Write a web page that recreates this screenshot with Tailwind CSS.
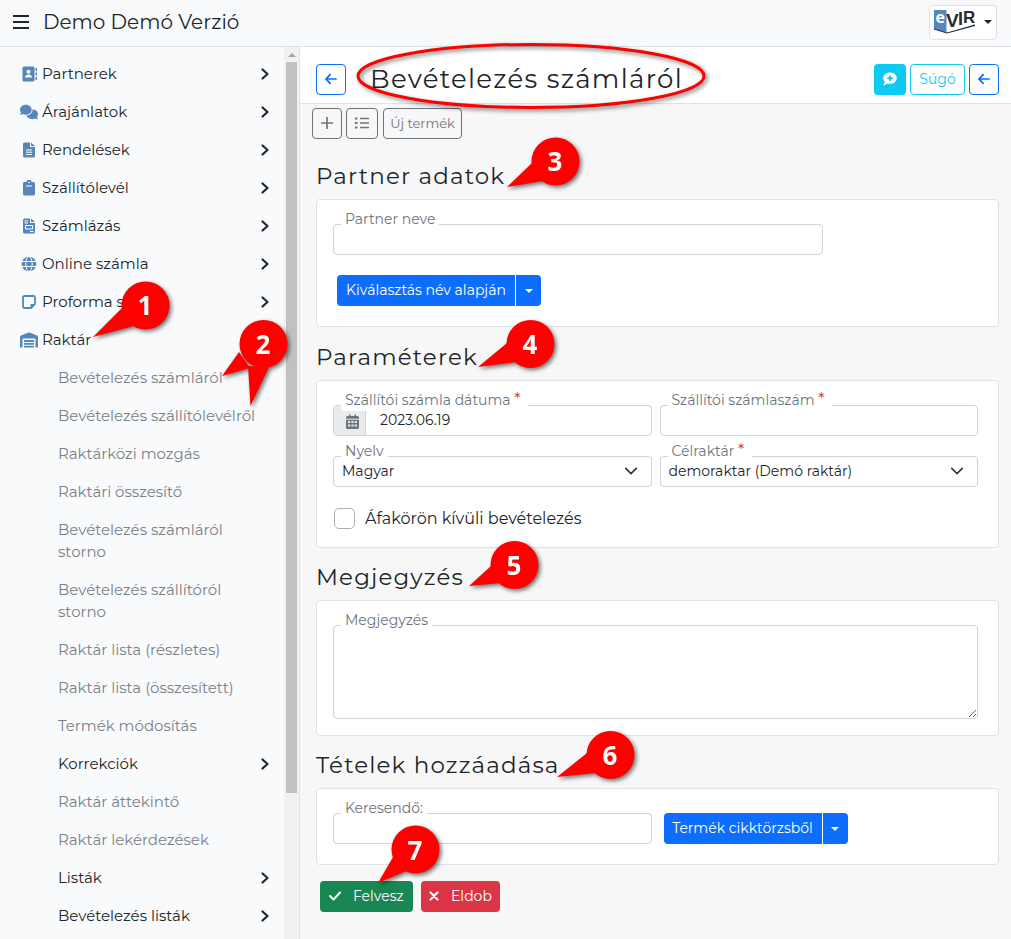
<!DOCTYPE html>
<html lang="hu">
<head>
<meta charset="utf-8">
<meta name="viewport" content="width=device-width, initial-scale=1">
<title>Bevételezés számláról</title>
<script src="https://cdn.jsdelivr.net/npm/@tailwindcss/browser@4"></script>
</head>
<body class="relative h-screen overflow-hidden bg-[#f7f7f7] font-[Montserrat,Inter,sans-serif] text-[15px] leading-[22px] text-[#212529]">

<svg class="hidden" aria-hidden="true">
  <symbol id="chev" viewBox="0 0 10 14"><path d="M2.500 2.500L7.500 7l-5 4.500" fill="none" stroke="currentColor" stroke-width="2.200" stroke-linecap="round" stroke-linejoin="round"/></symbol>
  <symbol id="left" viewBox="0 0 448 512"><path fill="currentColor" d="M9.400 233.400c-12.500 12.500-12.500 32.800 0 45.300l160 160c12.500 12.500 32.800 12.500 45.300 0s12.500-32.800 0-45.300L109.200 288H416c17.700 0 32-14.300 32-32s-14.300-32-32-32H109.300l105.400-105.400c12.500-12.500 12.500-32.800 0-45.300s-32.800-12.500-45.300 0l-160 160z"/></symbol>
  <symbol id="caret" viewBox="0 0 8 4"><path d="M0 0h8L4 4z" fill="currentColor"/></symbol>
  <symbol id="down" viewBox="0 0 16 16"><path d="M2 5l6 6 6-6" fill="none" stroke="#343a40" stroke-width="2" stroke-linecap="round" stroke-linejoin="round"/></symbol>
</svg>

<div class="flex h-full flex-col">
  <header class="flex h-[47px] shrink-0 items-center border-b border-[#dee2e6] bg-[#f8f9fa] pr-3.5 pb-0.5 pl-[13px]">
    <button type="button" aria-label="Menü" class="flex w-4 flex-col gap-[4px]">
      <span class="h-0.5 w-4 bg-[#212529]"></span><span class="h-0.5 w-4 bg-[#212529]"></span><span class="h-0.5 w-4 bg-[#212529]"></span>
    </button>
    <a href="#" class="ml-3.5 text-[20px] leading-7">Demo Demó Verzió</a>
    <button type="button" aria-label="eVIR" class="ml-auto flex h-[35px] w-[68px] items-center gap-2 rounded border border-[#dee2e6] bg-white pl-1">
      <svg class="h-6 w-[42px] overflow-visible" viewBox="0 0 42 24" aria-hidden="true">
        <path d="M0 0h12.500v23L0 19z" fill="#5587bb"/>
        <path d="M0 18.500l13 4 28-8v1.500l-28 7.500-13-4z" fill="#2b2b2b"/>
        <text x="1.500" y="13" font-family="Open Sans" font-weight="700" font-size="16" fill="#fff">e</text>
        <text x="12" y="17" font-family="Liberation Sans" font-weight="700" font-size="19" fill="#2b2b2b">V</text>
        <text x="24" y="15" font-family="Liberation Sans" font-weight="700" font-size="18" fill="#2b2b2b">I</text>
        <text x="29" y="13" font-family="Liberation Sans" font-weight="700" font-size="17" fill="#2b2b2b">R</text>
      </svg>
      <svg class="h-1 w-2"><use href="#caret"/></svg>
    </button>
  </header>

  <div class="flex min-h-0 flex-1">
    <aside class="flex w-[300px] shrink-0 border-r border-[#dee2e6] bg-[#f8fafc]">
      <nav class="min-w-0 flex-1 overflow-hidden pt-2 pr-3.5 pl-5">
        <ul>
          <li><a href="#" class="flex items-center py-2"><svg class="mr-1 h-4 w-[18px] text-[#5587bb]" viewBox="0 0 18 16"><path fill="currentColor" d="M4 .5h9a1.500 1.500 0 0 1 1.500 1.500v12a1.500 1.500 0 0 1-1.500 1.500H4A1.500 1.500 0 0 1 2.500 14V2A1.500 1.500 0 0 1 4 .5zM15.500 2h1.500v3h-1.500zM15.500 6.500h1.500v3h-1.500zM15.500 11h1.500v3h-1.500z"/><circle cx="8.500" cy="5.800" r="2" fill="#fff"/><path d="M5 11.500c0-4 7-4 7 0z" fill="#fff"/></svg><span class="flex-1">Partnerek</span><svg class="h-3.5 w-2.5"><use href="#chev"/></svg></a></li>
          <li><a href="#" class="flex items-center py-2"><svg class="mr-1 h-4 w-[18px] text-[#5587bb]" viewBox="0 0 640 512"><path fill="currentColor" d="M208 352c114.900 0 208-78.800 208-176S322.900 0 208 0S0 78.800 0 176c0 38.600 14.700 74.300 39.600 103.400c-3.500 9.400-8.700 17.700-14.200 24.700c-4.800 6.200-9.700 11-13.300 14.300c-1.800 1.600-3.300 2.900-4.300 3.700C1.100 327.200-1.700 336 .8 343.700S9.900 352 16 352c21.800 0 43.800-5.600 62.100-12.500c9.200-3.500 17.800-7.400 25.300-11.400C134.100 343.300 169.800 352 208 352zM448 176c0 112.300-99.100 196.900-216.500 207C255.800 457.400 336.400 512 432 512c38.200 0 73.900-8.700 104.700-23.900c7.500 4 16 7.900 25.200 11.400c18.300 6.900 40.300 12.500 62.100 12.500c8.100 0 15.300-5.300 15.300-13.100c0-6-2.500-9.700-7.700-13.900c-9-7.500-22-22-31.400-45.500c25-29.200 39.800-65 39.800-103.500c0-93.900-87-170.500-196.500-175.700z"/></svg><span class="flex-1">Árajánlatok</span><svg class="h-3.5 w-2.5"><use href="#chev"/></svg></a></li>
          <li><a href="#" class="flex items-center py-2"><svg class="mr-1 h-4 w-[18px] text-[#5587bb]" viewBox="0 0 18 16"><path fill="currentColor" d="M4.500.5H10V5h5v9a1.500 1.500 0 0 1-1.500 1.500h-9A1.500 1.500 0 0 1 3 14V2A1.500 1.500 0 0 1 4.500.5zM11 .5L15 4h-4z"/><path d="M6 8h6M6 10.200h6M6 12.500h6" stroke="#fff"/></svg><span class="flex-1">Rendelések</span><svg class="h-3.5 w-2.5"><use href="#chev"/></svg></a></li>
          <li><a href="#" class="flex items-center py-2"><svg class="mr-1 h-4 w-[18px] text-[#5587bb]" viewBox="0 0 18 16"><path fill="currentColor" d="M4.500 2h2a2.500 2.500 0 0 1 5 0h2A1.500 1.500 0 0 1 15 3.500V14a1.500 1.500 0 0 1-1.500 1.500h-9A1.500 1.500 0 0 1 3 14V3.500A1.500 1.500 0 0 1 4.500 2z"/><circle cx="9" cy="2.500" r=".8" fill="#fff"/><path d="M6 6h6" stroke="#fff"/></svg><span class="flex-1">Szállítólevél</span><svg class="h-3.5 w-2.5"><use href="#chev"/></svg></a></li>
          <li><a href="#" class="flex items-center py-2"><svg class="mr-1 h-4 w-[18px] text-[#5587bb]" viewBox="0 0 18 16"><path fill="currentColor" d="M4.500.5H10V5h5v9a1.500 1.500 0 0 1-1.500 1.500h-9A1.500 1.500 0 0 1 3 14V2A1.500 1.500 0 0 1 4.500.5zM11 .5L15 4h-4z"/><path d="M4.500 3H8M4.500 5H8M10 13.500h3.500M5.500 7.500h7v3.500h-7z" fill="none" stroke="#fff"/></svg><span class="flex-1">Számlázás</span><svg class="h-3.5 w-2.5"><use href="#chev"/></svg></a></li>
          <li><a href="#" class="flex items-center py-2"><svg class="mr-1 h-4 w-[18px] text-[#5587bb]" viewBox="0 0 18 16"><circle cx="9" cy="8" r="7.300" fill="currentColor"/><ellipse cx="9" cy="8" rx="3.200" ry="7.500" fill="none" stroke="#f8fafc"/><path d="M1.500 5.500h15M1.500 10.500h15" stroke="#f8fafc"/></svg><span class="flex-1">Online számla</span><svg class="h-3.5 w-2.5"><use href="#chev"/></svg></a></li>
          <li><a href="#" class="flex items-center py-2"><svg class="mr-1 h-4 w-[18px] text-[#5587bb]" viewBox="0 0 18 16"><path d="M4.500 2h9a1.500 1.500 0 0 1 1.500 1.500V10l-4 4H4.500A1.500 1.500 0 0 1 3 12.500v-9A1.500 1.500 0 0 1 4.500 2z" fill="none" stroke="currentColor" stroke-width="1.800"/><path d="M10.500 14v-4H15z" fill="currentColor"/></svg><span class="flex-1">Proforma számla</span><svg class="h-3.5 w-2.5"><use href="#chev"/></svg></a></li>
          <li><a href="#" class="flex items-center py-2"><svg class="mr-1 h-4 w-[18px] text-[#5587bb]" viewBox="0 0 18 16"><path fill="currentColor" d="M0 15.500V5q0-1 1-1.400L8.500.6q.5-.2 1 0L17 3.600Q18 4 18 5v10.500h-2.500V7.500q0-1-1-1h-11q-1 0-1 1v8zM4 8h10v2H4zM4 11h10v1.700H4zM4 13.800h10v1.700H4z"/></svg><span class="flex-1">Raktár</span></a>
            <ul class="pl-[38px] text-[#7b8187]">
              <li><a href="#" class="block py-2 whitespace-nowrap">Bevételezés számláról</a></li>
              <li><a href="#" class="block py-2 whitespace-nowrap">Bevételezés szállítólevélről</a></li>
              <li><a href="#" class="block py-2">Raktárközi mozgás</a></li>
              <li><a href="#" class="block py-2">Raktári összesítő</a></li>
              <li><a href="#" class="block py-2 pr-8">Bevételezés számláról storno</a></li>
              <li><a href="#" class="block py-2 pr-8">Bevételezés szállítóról storno</a></li>
              <li><a href="#" class="block py-2">Raktár lista (részletes)</a></li>
              <li><a href="#" class="block py-2">Raktár lista (összesített)</a></li>
              <li><a href="#" class="block py-2">Termék módosítás</a></li>
              <li><a href="#" class="flex items-center py-2 text-[#212529]"><span class="flex-1">Korrekciók</span><svg class="h-3.5 w-2.5"><use href="#chev"/></svg></a></li>
              <li><a href="#" class="block py-2">Raktár áttekintő</a></li>
              <li><a href="#" class="block py-2">Raktár lekérdezések</a></li>
              <li><a href="#" class="flex items-center py-2 text-[#212529]"><span class="flex-1">Listák</span><svg class="h-3.5 w-2.5"><use href="#chev"/></svg></a></li>
              <li><a href="#" class="flex items-center py-2 text-[#212529]"><span class="flex-1">Bevételezés listák</span><svg class="h-3.5 w-2.5"><use href="#chev"/></svg></a></li>
            </ul>
          </li>
        </ul>
      </nav>
      <div class="flex w-[15px] flex-col items-center bg-[#f1f1f1]" aria-hidden="true">
        <svg class="mt-1.5 mb-[5px] h-1 w-2 shrink-0 rotate-180 text-[#a3a3a3]"><use href="#caret"/></svg>
        <div class="h-[82%] w-[11px] bg-[#c1c1c1]"></div>
      </div>
    </aside>

    <main class="min-w-0 flex-1">
      <div class="flex h-[57px] items-center border-b border-[#dee2e6] bg-white pt-2 pr-3 pl-4">
        <button type="button" aria-label="Vissza" class="flex h-[31px] w-[30px] items-center justify-center rounded border border-[#0d6efd] text-[#0d6efd]"><svg class="h-3.5 w-3"><use href="#left"/></svg></button>
        <h1 class="ml-6 flex-1 text-[26px] leading-8 font-normal tracking-wider">Bevételezés számláról</h1>
        <div class="flex gap-1">
          <button type="button" aria-label="Megjegyzés küldése" class="flex h-[31px] w-8 items-center justify-center rounded bg-[#0dcaf0]"><svg class="h-3.5 w-3.5" viewBox="0 0 14 14"><path d="M7 .5C3.200.5.3 3 .3 6.100c0 1.400.6 2.700 1.500 3.700C1.500 11.300.7 12.400 0 13.200c1.600 0 3.100-.7 4.200-1.600.9.300 1.800.4 2.800.4 3.800 0 6.800-2.600 6.800-5.900S10.800.5 7 .5z" fill="#fff"/><path d="M7 3.500v5.400M4.300 6.200h5.400" stroke="#0dcaf0" stroke-width="1.900"/></svg></button>
          <button type="button" class="h-[31px] w-[55px] rounded border border-[#0dcaf0] text-[14px] text-[#0dcaf0]">Súgó</button>
          <button type="button" aria-label="Vissza" class="flex h-[31px] w-[30px] items-center justify-center rounded border border-[#0d6efd] text-[#0d6efd]"><svg class="h-3.5 w-3"><use href="#left"/></svg></button>
        </div>
      </div>

      <div class="flex gap-1 pt-1 pl-3 text-[#6c757d]">
        <button type="button" aria-label="Új" class="flex h-[31px] w-[30px] items-center justify-center rounded border border-[#6c757d] pb-0.5"><svg class="h-3 w-3" viewBox="0 0 12 12"><path d="M6 .5v11M.5 6h11" stroke="currentColor" stroke-width="1.700" stroke-linecap="round"/></svg></button>
        <button type="button" aria-label="Lista" class="flex h-[31px] w-8 items-center justify-center rounded border border-[#6c757d] pb-0.5"><svg class="h-3 w-3.5" viewBox="0 0 14 12"><path d="M0 1.500h2.500M0 6h2.500M0 10.500h2.500" stroke="currentColor" stroke-width="2.200"/><path d="M5 1.500h9M5 6h9M5 10.500h9" stroke="currentColor" stroke-width="1.600"/></svg></button>
        <button type="button" class="ml-px h-[31px] w-[79px] rounded border border-[#6c757d] pb-0.5 text-[13px]">Új termék</button>
      </div>

      <form class="pr-3 pl-4">
        <h2 class="pt-[21px] pb-[7px] text-[23px] leading-8 font-normal tracking-wider">Partner adatok</h2>
        <section class="rounded border border-[#dee2e6] bg-white pt-6 pr-5 pb-5 pl-4">
          <div class="relative w-[76%]">
            <label for="partner" class="absolute -top-4 left-2 rounded bg-white px-1 text-[14px] text-[#6c757d]">Partner neve</label>
            <input id="partner" class="block h-[31px] w-full rounded border border-[#ced4da] bg-white px-2 text-[14px]">
          </div>
          <div class="mt-5 ml-1 flex h-[31px] gap-px text-[14px] text-white">
            <button type="button" class="w-[178px] rounded-l bg-[#0d6efd] pb-0.5">Kiválasztás név alapján</button>
            <button type="button" aria-label="További lehetőségek" class="flex w-[25px] items-center justify-center rounded-r bg-[#0d6efd]"><svg class="h-1 w-2"><use href="#caret"/></svg></button>
          </div>
        </section>

        <h2 class="pt-3.5 pb-[7px] text-[23px] leading-8 font-normal tracking-wider">Paraméterek</h2>
        <section class="rounded border border-[#dee2e6] bg-white pt-6 pr-5 pb-[18px] pl-4">
          <div class="grid grid-cols-2 gap-x-2 gap-y-5">
            <div class="relative">
              <label for="date" class="absolute -top-4 left-2 rounded bg-white pr-2 pl-1 text-[14px] text-[#6c757d]">Szállítói számla dátuma <span class="text-[16px] leading-none text-[#dc3545]">*</span></label>
              <div class="flex h-[31px] overflow-hidden rounded border border-[#ced4da] bg-white">
                <span class="flex w-8 items-end justify-center border-r border-[#ced4da] bg-[#e9ecef] pb-1.5 pl-1.5 text-[#6c757d]"><svg class="h-[15px] w-[13px]" viewBox="0 0 13 15"><path fill="currentColor" d="M1.500 2H3V.5h1.500V2h4V.5H10V2h1.500A1.500 1.500 0 0 1 13 3.500v10a1.500 1.500 0 0 1-1.500 1.500h-10A1.500 1.500 0 0 1 0 13.500v-10A1.500 1.500 0 0 1 1.500 2z"/><path d="M0 5.200h13" stroke="#e9ecef"/><path d="M2 8h9M2 11.500h9" stroke="#e9ecef" stroke-width="1.800" stroke-dasharray="2.200 1.200"/></svg></span>
                <input id="date" value="2023.06.19" class="min-w-0 flex-1 px-3.5 pb-0.5 text-[14px]">
              </div>
            </div>
            <div class="relative">
              <label for="invoice" class="absolute -top-4 left-2 rounded bg-white pr-2 pl-1 text-[14px] text-[#6c757d]">Szállítói számlaszám <span class="text-[16px] leading-none text-[#dc3545]">*</span></label>
              <input id="invoice" class="block h-[31px] w-full rounded border border-[#ced4da] bg-white px-2 text-[14px]">
            </div>
            <div class="relative">
              <label for="lang" class="absolute -top-4 left-2 rounded bg-white px-1 text-[14px] text-[#6c757d]">Nyelv</label>
              <select id="lang" class="block h-[31px] w-full appearance-none rounded border border-[#ced4da] bg-white px-2 pb-0.5 text-[14px]"><option>Magyar</option></select>
              <svg class="pointer-events-none absolute top-2 right-3.5 size-3.5"><use href="#down"/></svg>
            </div>
            <div class="relative">
              <label for="store" class="absolute -top-4 left-2 rounded bg-white pr-2 pl-1 text-[14px] text-[#6c757d]">Célraktár <span class="text-[16px] leading-none text-[#dc3545]">*</span></label>
              <select id="store" class="block h-[31px] w-full appearance-none rounded border border-[#ced4da] bg-white px-2 pb-0.5 text-[14px]"><option>demoraktar (Demó raktár)</option></select>
              <svg class="pointer-events-none absolute top-2 right-3.5 size-3.5"><use href="#down"/></svg>
            </div>
          </div>
          <div class="mt-[21px] flex h-[21px] items-center">
            <input type="checkbox" id="vat" class="ml-px size-[21px] appearance-none rounded-[5px] border border-[#adb0b3] bg-white">
            <label for="vat" class="pl-2.5 text-[16px]">Áfakörön kívüli bevételezés</label>
          </div>
        </section>

        <h2 class="pt-[13px] pb-[7px] text-[23px] leading-8 font-normal tracking-wider">Megjegyzés</h2>
        <section class="rounded border border-[#dee2e6] bg-white pt-6 pr-5 pb-4 pl-4">
          <div class="relative">
            <label for="note" class="absolute -top-4 left-2 rounded bg-white px-1 text-[14px] text-[#6c757d]">Megjegyzés</label>
            <textarea id="note" class="block h-[94px] w-full resize rounded border border-[#ced4da] bg-white px-2 text-[14px]"></textarea>
          </div>
        </section>

        <h2 class="pt-[13px] pb-[7px] text-[23px] leading-8 font-normal tracking-wider">Tételek hozzáadása</h2>
        <section class="grid grid-cols-2 gap-x-2 rounded border border-[#dee2e6] bg-white pt-6 pr-5 pb-5 pl-4">
          <div class="relative">
            <label for="search" class="absolute -top-4 left-2 rounded bg-white px-1 text-[14px] text-[#6c757d]">Keresendő:</label>
            <input id="search" class="block h-[31px] w-full rounded border border-[#ced4da] bg-white px-2 text-[14px]">
          </div>
          <div class="ml-1 flex h-[31px] gap-px text-[14px] text-white">
            <button type="button" class="w-[158px] rounded-l bg-[#0d6efd] pb-0.5">Termék cikktörzsből</button>
            <button type="button" aria-label="További lehetőségek" class="flex w-[25px] items-center justify-center rounded-r bg-[#0d6efd]"><svg class="h-1 w-2"><use href="#caret"/></svg></button>
          </div>
        </section>

        <div class="mt-4 ml-1 flex gap-2 text-[14px] text-white">
          <button type="button" class="flex h-[31px] w-[93px] items-center gap-3 rounded bg-[#198754] pb-0.5 pl-[9px]"><svg class="h-2.5 w-3" viewBox="0 0 12 10"><path d="M1 5l3.500 3.500L11 1.500" fill="none" stroke="#fff" stroke-width="2" stroke-linecap="round" stroke-linejoin="round"/></svg>Felvesz</button>
          <button type="button" class="flex h-[31px] w-[79px] items-center gap-3 rounded bg-[#dc3545] pb-0.5 pl-2"><svg class="size-2.5" viewBox="0 0 10 10"><path d="M1.500 1.500l7 7M8.500 1.500l-7 7" stroke="#fff" stroke-width="2.200" stroke-linecap="round"/></svg>Eldob</button>
        </div>
      </form>
    </main>
  </div>
</div>

<!-- Numbered guide markers floating above the page -->
<svg class="pointer-events-none absolute top-0 left-0 h-[939px] w-[1011px] font-['Open_Sans',sans-serif] text-[26px] font-bold drop-shadow-[2px_2px_2px_rgb(0_0_0/0.55)]" viewBox="0 0 1011 939">
  <ellipse cx="531" cy="76" rx="173" ry="31.500" fill="none" stroke="#f00" stroke-width="3"/>
  <g fill="#f00">
    <path d="M122 308L93 337L134 326z"/><circle cx="145.500" cy="305.500" r="24"/>
    <path d="M239 352L222 376L250 368z"/><path d="M248 366L250.500 406L269 367z"/><circle cx="263.500" cy="344" r="24"/>
    <path d="M532 163L507 187L543 181z"/><circle cx="555.500" cy="161.500" r="24"/>
    <path d="M507 343L478 367L517 362z"/><circle cx="530.500" cy="344" r="24"/>
    <path d="M491 566L469 586L501 583z"/><circle cx="514.500" cy="565" r="24"/>
    <path d="M587 753L557 777L596 773z"/><circle cx="610.500" cy="755" r="24"/>
    <path d="M393 857L378 883L406 871z"/><circle cx="415.500" cy="849.500" r="24"/>
  </g>
  <g fill="#fff" text-anchor="middle">
    <text x="145" y="315">1</text><text x="263" y="354">2</text><text x="555" y="171">3</text><text x="530" y="354">4</text><text x="514" y="575">5</text><text x="610" y="765">6</text><text x="415" y="860">7</text>
  </g>
</svg>
</body>
</html>
